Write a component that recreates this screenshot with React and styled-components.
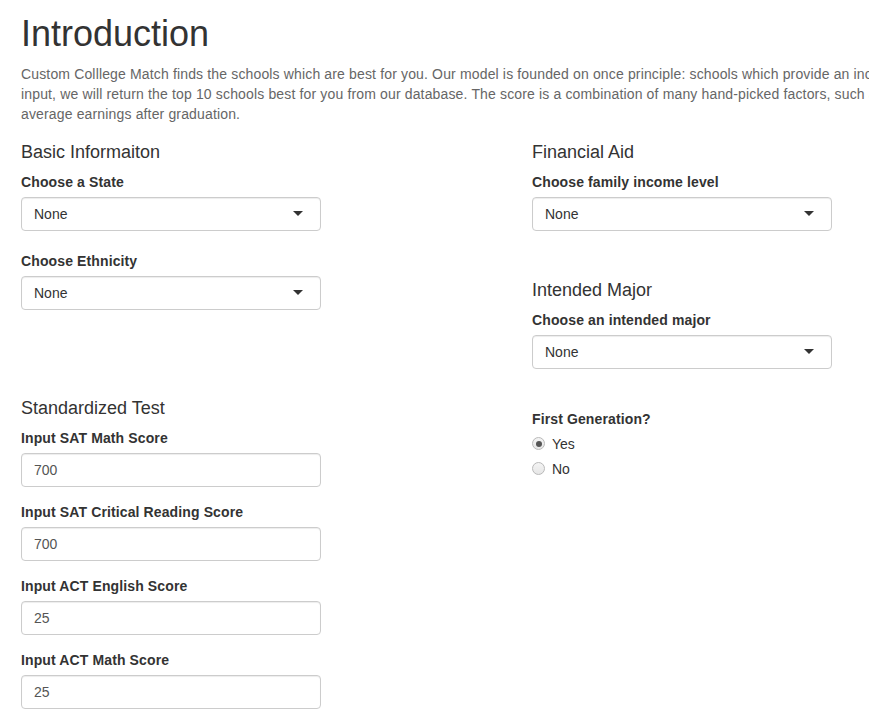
import React from "react";
import { styled, createGlobalStyle } from "styled-components";

const GlobalStyle = createGlobalStyle`
  html, body {
    margin: 0;
    padding: 0;
    overflow: hidden;
    background: #fff;
  }
  body {
    font-family: "Liberation Sans", Arial, Helvetica, sans-serif;
    font-size: 14px;
    line-height: 20px;
    color: #333;
  }
`;

const Page = styled.div`
  width: 1100px;
  padding: 0 21px;
`;

const Title = styled.h1`
  margin: 14px 0 10px;
  font-size: 36px;
  font-weight: 400;
  line-height: 39.6px;
  color: #333;
`;

const Intro = styled.p`
  margin: 0;
  color: #666;
  letter-spacing: 0.15px;
  white-space: nowrap;
`;

const Row = styled.div`
  display: grid;
  grid-template-columns: 511px 511px;
  align-items: start;
  padding-top: ${(p) => p.$top || 0}px;
`;

const Column = styled.div`
  display: flex;
  flex-direction: column;
  padding-top: ${(p) => p.$top || 0}px;
`;

const SectionTitle = styled.h4`
  margin: ${(p) => p.$top || 0}px 0 10px;
  font-size: 18px;
  font-weight: 400;
  line-height: 20px;
  color: #333;
`;

const Group = styled.div`
  display: flex;
  flex-direction: column;
  width: 300px;
  margin-bottom: ${(p) => p.$gap || 15}px;
`;

const Label = styled.label`
  font-weight: 700;
  margin-bottom: 5px;
  line-height: 20px;
  letter-spacing: 0.12px;
  color: #333;
`;

const SelectBox = styled.div`
  position: relative;
  box-sizing: border-box;
  height: 34px;
  padding: 6px 12px;
  border: 1px solid #ccc;
  border-radius: 4px;
  background: #fff;
  color: #333;
  box-shadow: inset 0 1px 1px rgba(0, 0, 0, 0.075);

  &::after {
    content: "";
    position: absolute;
    right: 17px;
    top: 50%;
    margin-top: -3px;
    border-style: solid;
    border-width: 5px 5px 0;
    border-color: #333 transparent transparent;
  }
`;

const TextBox = styled.div`
  box-sizing: border-box;
  height: 34px;
  padding: 6px 12px;
  border: 1px solid #ccc;
  border-radius: 4px;
  background: #fff;
  color: #555;
  box-shadow: inset 0 1px 1px rgba(0, 0, 0, 0.075);
`;

const Options = styled.div`
  display: flex;
  flex-direction: column;
  gap: 5px;
`;

const RadioRow = styled.div`
  display: flex;
  align-items: center;
  height: 20px;
  color: #333;
`;

const RadioDot = styled.span`
  position: relative;
  box-sizing: border-box;
  width: 13px;
  height: 13px;
  margin: 0 7px 0 0;
  border: 1px solid #b9b9b9;
  border-radius: 50%;
  background: linear-gradient(#f4f4f4, #e6e6e6);

  &::after {
    content: "";
    display: ${(p) => (p.$checked ? "block" : "none")};
    position: absolute;
    left: 2.5px;
    top: 2.5px;
    width: 6px;
    height: 6px;
    border-radius: 50%;
    background: #555;
  }
`;

const SelectField = ({ label, value = "None", gap = 20 }) => (
  <Group $gap={gap}>
    <Label>{label}</Label>
    <SelectBox>{value}</SelectBox>
  </Group>
);

const TextField = ({ label, value }) => (
  <Group>
    <Label>{label}</Label>
    <TextBox>{value}</TextBox>
  </Group>
);

const App = () => {
  return (
    <>
      <GlobalStyle />
      <Page>
        <Title>Introduction</Title>
        <Intro>
          Custom Colllege Match finds the schools which are best for you. Our model is founded on once principle: schools which provide an increased value to students are best. Given your
          <br />
          input, we will return the top 10 schools best for you from our database. The score is a combination of many hand-picked factors, such as graduation rate, cost and
          <br />
          average earnings after graduation.
        </Intro>

        <Row $top={18}>
          <Column>
            <SectionTitle>Basic Informaiton</SectionTitle>
            <SelectField label="Choose a State" />
            <SelectField label="Choose Ethnicity" />
          </Column>
          <Column>
            <SectionTitle>Financial Aid</SectionTitle>
            <SelectField label="Choose family income level" />
            <SectionTitle $top={29}>Intended Major</SectionTitle>
            <SelectField label="Choose an intended major" gap={19} />
          </Column>
        </Row>

        <Row>
          <Column>
            <SectionTitle $top={10}>Standardized Test</SectionTitle>
            <TextField label="Input SAT Math Score" value="700" />
            <TextField label="Input SAT Critical Reading Score" value="700" />
            <TextField label="Input ACT English Score" value="25" />
            <TextField label="Input ACT Math Score" value="25" />
          </Column>
          <Column $top={21}>
            <Group>
              <Label>First Generation?</Label>
              <Options>
                <RadioRow>
                  <RadioDot $checked />
                  Yes
                </RadioRow>
                <RadioRow>
                  <RadioDot />
                  No
                </RadioRow>
              </Options>
            </Group>
          </Column>
        </Row>
      </Page>
    </>
  );
};

export default App;
